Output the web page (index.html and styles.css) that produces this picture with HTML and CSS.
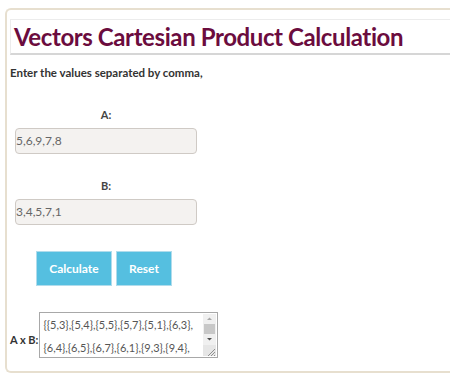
FILE: index.html
```html
<!DOCTYPE html>
<html>
<head>
<meta charset="utf-8">
<link rel="stylesheet" href="styles.css">
</head>
<body>
<div class="panel">
  <h1 class="title">Vectors Cartesian Product Calculation</h1>
  <p class="intro">Enter the values separated by comma,</p>
  <div class="field">
    <label class="label">A:</label>
    <div class="input">5,6,9,7,8</div>
  </div>
  <div class="field">
    <label class="label">B:</label>
    <div class="input">3,4,5,7,1</div>
  </div>
  <div class="buttons">
    <button class="btn">Calculate</button>
    <button class="btn">Reset</button>
  </div>
  <div class="result">
    <span class="result-label">A x B:</span>
    <div class="textarea">
      <div class="ta-text">{{5,3},{5,4},{5,5},{5,7},{5,1},{6,3},<br>{6,4},{6,5},{6,7},{6,1},{9,3},{9,4},</div>
      <div class="scrollbar">
        <svg class="arrow" width="13" height="9" viewBox="0 0 13 9"><path d="M4 6 L6.5 3.5 L9 6 Z" fill="#a8a8a8"/></svg>
        <div class="thumb"></div>
        <svg class="arrow" width="13" height="9" viewBox="0 0 13 9"><path d="M4 3 L6.5 5.5 L9 3 Z" fill="#505050"/></svg>
        <div class="corner">
          <svg width="13" height="11" viewBox="0 0 13 11"><path d="M12 4 L5 11 M12 7 L8 11 M12 10 L11 11" stroke="#909090" stroke-width="1"/></svg>
        </div>
      </div>
    </div>
  </div>
</div>
</body>
</html>
```
FILE: styles.css
```css
html, body {
  margin: 0;
  padding: 0;
  background: #ffffff;
}
body {
  padding: 8px 0 0 5px;
  font-family: Lato, "Open Sans", sans-serif;
  color: #333;
  overflow: hidden;
}
.panel {
  border: 2px solid #e7dfcf;
  border-right: none;
  border-radius: 6px 0 0 6px;
  padding: 9px 0 10px 3px;
  width: 460px;
  box-sizing: border-box;
  height: 365px;
}
.title {
  margin: 0;
  font-size: 24px;
  font-weight: 700;
  letter-spacing: -0.4px;
  color: #6b0c3e;
  border: 1px solid #ececec;
  border-bottom: 2px solid #d6d6d6;
  border-right: none;
  padding: 1px 0 1px 3px;
  line-height: 31px;
  white-space: nowrap;
}
.intro {
  margin: 10px 0 0 0;
  font-size: 11.5px;
  font-weight: 700;
  color: #333;
  line-height: 16px;
}
.field {
  width: 182px;
  margin-left: 5px;
  display: flex;
  flex-direction: column;
}
.field + .field { margin-top: 25px; }
.field:first-of-type { margin-top: 27px; }
.label {
  text-align: center;
  font-size: 11px;
  font-weight: 700;
  color: #444;
  line-height: 14px;
  margin-bottom: 6px;
}
.input {
  height: 26px;
  box-sizing: border-box;
  border: 1px solid #cfcac5;
  border-radius: 4px;
  background: #f4f2f0;
  font-size: 12px;
  color: #666;
  line-height: 24px;
  padding-left: 0;
}
.buttons {
  display: flex;
  gap: 4px;
  margin: 26px 0 0 26px;
}
.btn {
  height: 35px;
  border: 1px solid #b0dcec;
  background: #55bfe0;
  color: #fff;
  font-family: Lato, "Open Sans", sans-serif;
  font-size: 12px;
  font-weight: 700;
  padding: 0;
}
.btn:first-child { width: 76px; }
.btn:last-child { width: 56px; }
.result {
  display: flex;
  align-items: center;
  margin-top: 26px;
  margin-left: 0;
}
.result-label {
  font-size: 11px;
  font-weight: 700;
  color: #333;
  margin-right: 1px;
  margin-top: 8px;
}
.textarea {
  width: 179px;
  height: 46px;
  box-sizing: border-box;
  border: 1px solid #a8a8a8;
  display: flex;
  background: #fff;
}
.ta-text {
  flex: 1;
  font-size: 11px;
  color: #555;
  line-height: 23px;
  padding: 0 0 0 3px;
  white-space: nowrap;
  overflow: hidden;
}
.scrollbar {
  width: 13px;
  background: #f0f0f0;
  display: flex;
  flex-direction: column;
  margin: 1px 1px 1px 0;
}
.arrow { display: block; }
.thumb {
  height: 10px;
  background: #c8c8c8;
  margin: 1px 1px;
}
.corner {
  margin-top: auto;
  height: 11px;
  background: #e6e6e6;
}
.corner svg { display: block; }
```
